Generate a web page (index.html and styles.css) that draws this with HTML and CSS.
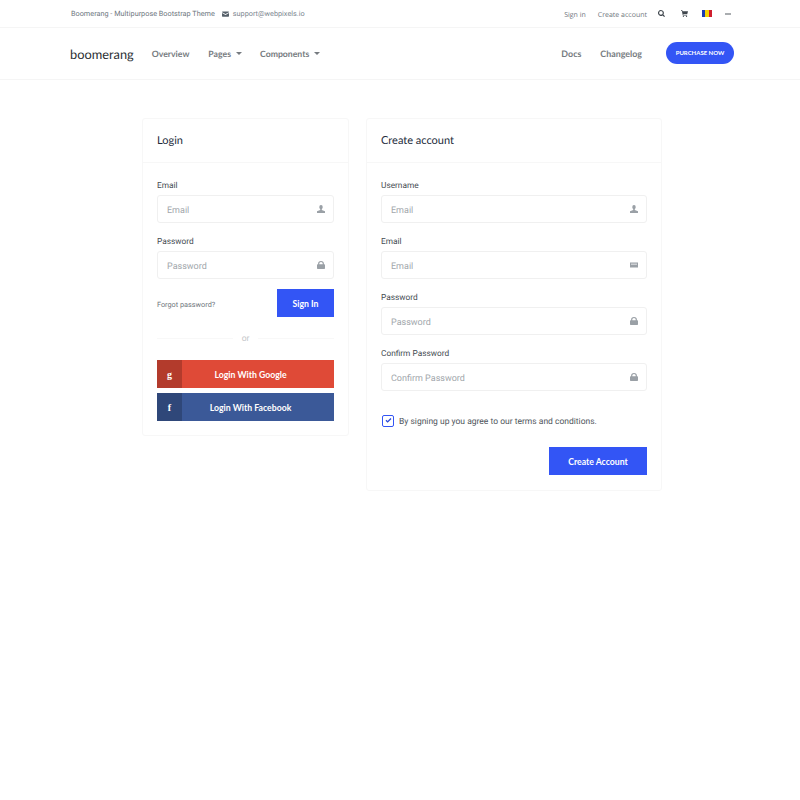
FILE: index.html
```html
<!DOCTYPE html>
<html lang="en">
<head>
    <meta charset="UTF-8">
    <meta name="viewport" content="width=device-width, initial-scale=1.0">
    <title>Boomerang - Login</title>
    <link rel="stylesheet" href="styles.css">
</head>
<body>

    <div class="topbar">
        <div class="topbar-left">
            <span>Boomerang - Multipurpose Bootstrap Theme</span>
            <span class="topbar-mail">
                <svg class="ico-mail" viewBox="0 0 12 10"><path d="M0 1.500A1 1 0 0 1 1 .5h10a1 1 0 0 1 1 1v.4L6 5.200 0 1.900zM0 3.200V8.500a1 1 0 0 0 1 1h10a1 1 0 0 0 1-1V3.200L6 6.500z"/></svg>
                support@webpixels.io
            </span>
        </div>
        <div class="topbar-right">
            <a class="top-link">Sign in</a>
            <a class="top-link">Create account</a>
            <svg class="top-ico" viewBox="0 0 10 10"><path d="M4.200 0a4.200 4.200 0 1 0 2.300 7.700L8.800 10 10 8.800 7.700 6.500A4.200 4.200 0 0 0 4.200 0zm0 1.600a2.600 2.600 0 1 1 0 5.200 2.600 2.600 0 0 1 0-5.200z"/></svg>
            <svg class="top-ico cart" viewBox="0 0 10 10"><path d="M0 .5h1.900l.3 1.300H10L8.900 6H3.200l.2 1h5.300v.9H2.600L1.200 1.400H0z"/><circle cx="3.400" cy="9" r=".9"/><circle cx="7.900" cy="9" r=".9"/></svg>
            <span class="flag"><i class="flag-b"></i><i class="flag-y"></i><i class="flag-r"></i></span>
            <svg class="dots" viewBox="0 0 6 2"><circle cx="1" cy="1" r=".8"/><circle cx="3" cy="1" r=".8"/><circle cx="5" cy="1" r=".8"/></svg>
        </div>
    </div>

    <nav class="navbar">
        <div class="navbar-left">
            <a class="logo">boomerang</a>
            <a class="nav-link">Overview</a>
            <a class="nav-link caret">Pages</a>
            <a class="nav-link caret">Components</a>
        </div>
        <div class="navbar-right">
            <a class="nav-link">Docs</a>
            <a class="nav-link">Changelog</a>
            <button class="purchase-btn">PURCHASE NOW</button>
        </div>
    </nav>

    <div class="main">
        <div class="card card-login">
            <div class="card-header">Login</div>
            <div class="card-body">
                <label class="field-label">Email</label>
                <div class="input-box">
                    <span class="placeholder">Email</span>
                    <svg class="input-ico" viewBox="0 0 8 8"><path d="M2.300 1.900a1.700 1.900 0 1 1 3.400 0c0 1-.4 1.800-.9 2.200v.9L8 6.300V8H0V6.300L3.200 5v-.9c-.5-.4-.9-1.200-.9-2.200z"/></svg>
                </div>
                <label class="field-label">Password</label>
                <div class="input-box">
                    <span class="placeholder">Password</span>
                    <svg class="input-ico" viewBox="0 0 8 8"><path d="M1.100 3.300V2.600a2.900 2.600 0 0 1 5.800 0v.7H7.300a.7.700 0 0 1 .7.700v3.300a.7.700 0 0 1-.7.700H.7a.7.700 0 0 1-.7-.7V4a.7.700 0 0 1 .7-.7zm1.200 0h3.400V2.600a1.700 1.500 0 0 0-3.400 0z"/></svg>
                </div>
                <div class="forgot-row">
                    <a class="forgot">Forgot password?</a>
                    <button class="btn btn-signin">Sign In</button>
                </div>
                <div class="or-row"><span class="or-line"></span><span class="or-text">or</span><span class="or-line"></span></div>
                <button class="social google"><span class="social-ico">g</span><span class="social-text">Login With Google</span></button>
                <button class="social facebook"><span class="social-ico">f</span><span class="social-text">Login With Facebook</span></button>
            </div>
        </div>

        <div class="card card-create">
            <div class="card-header">Create account</div>
            <div class="card-body">
                <label class="field-label">Username</label>
                <div class="input-box">
                    <span class="placeholder">Email</span>
                    <svg class="input-ico" viewBox="0 0 8 8"><path d="M2.300 1.900a1.700 1.900 0 1 1 3.400 0c0 1-.4 1.800-.9 2.200v.9L8 6.300V8H0V6.300L3.200 5v-.9c-.5-.4-.9-1.200-.9-2.200z"/></svg>
                </div>
                <label class="field-label">Email</label>
                <div class="input-box">
                    <span class="placeholder">Email</span>
                    <svg class="input-ico" viewBox="0 0 8 8"><path d="M0 1.500h8v5H0zm1 1.200v.7h6v-.7z" fill-rule="evenodd"/></svg>
                </div>
                <label class="field-label">Password</label>
                <div class="input-box">
                    <span class="placeholder">Password</span>
                    <svg class="input-ico" viewBox="0 0 8 8"><path d="M1.100 3.300V2.600a2.900 2.600 0 0 1 5.800 0v.7H7.300a.7.700 0 0 1 .7.700v3.300a.7.700 0 0 1-.7.700H.7a.7.700 0 0 1-.7-.7V4a.7.700 0 0 1 .7-.7zm1.200 0h3.400V2.600a1.700 1.500 0 0 0-3.400 0z"/></svg>
                </div>
                <label class="field-label">Confirm Password</label>
                <div class="input-box">
                    <span class="placeholder">Confirm Password</span>
                    <svg class="input-ico" viewBox="0 0 8 8"><path d="M1.100 3.300V2.600a2.900 2.600 0 0 1 5.800 0v.7H7.300a.7.700 0 0 1 .7.700v3.300a.7.700 0 0 1-.7.700H.7a.7.700 0 0 1-.7-.7V4a.7.700 0 0 1 .7-.7zm1.200 0h3.400V2.600a1.700 1.500 0 0 0-3.400 0z"/></svg>
                </div>
                <div class="terms-row">
                    <span class="checkbox">
                        <svg viewBox="0 0 8 8"><path d="M.6 4.300 1.700 3.200 3 4.500 6.300 1.200 7.400 2.300 3 6.700z"/></svg>
                    </span>
                    <span class="terms">By signing up you agree to our terms and conditions.</span>
                </div>
                <div class="create-row">
                    <button class="btn btn-create">Create Account</button>
                </div>
            </div>
        </div>
    </div>

</body>
</html>
```

FILE: styles.css
```css
* { margin: 0; padding: 0; box-sizing: border-box; }
body { background: white; font-family: Roboto, sans-serif; color: #3a4149; text-rendering: geometricPrecision; }

.topbar {
    height: 28px; padding: 0 69px 0 71px; display: flex; justify-content: space-between; align-items: center;
    border-bottom: 1px solid #f5f5f5; font-size: 8px;
}
.topbar-left { display: flex; align-items: center; gap: 7px; color: #6e7780; font-size: 7.300px; }
.topbar-mail { display: flex; align-items: center; gap: 4px; font-size: 7.300px; color: #7d8790; }
.ico-mail { width: 7px; height: 6px; fill: #56606a; }
.topbar-right { display: flex; align-items: center; }
.top-link { font-family: "Open Sans", sans-serif; font-size: 7px; color: #6f767d; margin-right: 12px; padding-top: 3px; }
.top-link + .top-ico { margin-left: -1px; }
.top-ico { width: 7px; height: 7px; fill: #3f464d; margin-right: 16px; }
.top-ico.cart { margin-right: 14px; }
.flag { display: flex; width: 10px; height: 7px; margin-right: 13px; }
.flag i { flex: 1; }
.flag-b { background: #1d3bb0; }
.flag-y { background: #f5d100; }
.flag-r { background: #cf1f2e; }
.dots { width: 6px; height: 2px; fill: #3f464d; }

.navbar {
    height: 52px; padding: 0 66px 0 70px; display: flex; justify-content: space-between; align-items: center;
    border-bottom: 1px solid #f5f5f5;
}
.navbar-left, .navbar-right { display: flex; align-items: center; }
.logo { font-family: Lato, sans-serif; font-size: 12.800px; font-weight: 400; color: #2b2f33; margin-right: 18px; }
.nav-link { font-family: Lato, sans-serif; font-size: 8.700px; font-weight: 700; color: #767b80; margin-right: 19px; }
.caret { margin-right: 18px; }
.caret::after {
    content: ""; display: inline-block; margin-left: 5px; vertical-align: 2px;
    border-top: 3px solid #767b80; border-left: 3px solid transparent; border-right: 3px solid transparent;
}
.navbar-right .nav-link { font-size: 8.900px; }
.navbar-right .nav-link:last-of-type { margin-right: 24px; }
.purchase-btn {
    width: 68px; height: 22px; border: none; border-radius: 11px; background: #3355f5; color: white;
    font-family: Lato, sans-serif; font-size: 6px; font-weight: 700; margin-bottom: 2px;
}

.main { display: flex; align-items: flex-start; gap: 17px; padding: 38px 0 0 142px; }
.card { background: white; border: 1px solid #f7f7f7; border-radius: 3px; }
.card-login { width: 207px; }
.card-create { width: 296px; }
.card-header {
    height: 44px; padding: 0 14px; display: flex; align-items: center; border-bottom: 1px solid #f7f7f7;
    font-family: Lato, sans-serif; font-size: 11px; color: #232b3b;
}
.card-body { padding: 17px 14px 14px; }
.field-label { display: block; height: 15px; font-size: 8.300px; line-height: 13px; color: #454b52; }
.input-box {
    height: 28px; margin-bottom: 13px; padding: 3px 9px 0; display: flex; justify-content: space-between; align-items: center;
    border: 1px solid #f0f0f0; border-radius: 3px;
}
.placeholder { font-size: 9px; color: #a2a7ac; }
.input-ico { width: 8px; height: 8px; fill: #9aa0a6; margin-right: -1px; margin-top: -3px; }
.forgot-row { display: flex; justify-content: space-between; align-items: center; margin-bottom: 15px; margin-top: -3px; }
.forgot { font-size: 7.300px; color: #6f767d; padding-top: 2px; }
.btn {
    height: 28px; border: none; background: #3355f5; color: white;
    font-family: Lato, sans-serif; font-size: 8.700px; font-weight: 700;
}
.btn-signin { width: 57px; }
.btn-create { width: 98px; }
.or-row { display: flex; align-items: center; gap: 9px; height: 12px; margin-bottom: 16px; }
.or-line { flex: 1; border-top: 1px solid #f8f8f8; }
.or-text { font-size: 8.500px; color: #c4c6c9; padding-top: 2px; }
.social {
    width: 100%; height: 28px; margin-bottom: 5px; border: none; display: flex; align-items: center; color: white;
    font-family: Lato, sans-serif; font-size: 8.700px; font-weight: 700;
}
.social:last-child { margin-bottom: 0; }
.social-ico { width: 25px; height: 100%; display: flex; align-items: center; justify-content: center; font-family: "Liberation Serif", serif; font-size: 10px; font-weight: 700; }
.social-text { flex: 1; text-align: center; padding-right: 15px; }
.google { background: #df4a37; }
.google .social-ico { background: #b33b2c; }
.facebook { background: #3b5998; }
.facebook .social-ico { background: #2f4779; }
.terms-row { display: flex; align-items: center; gap: 5px; margin-top: 23px; margin-bottom: 20px; height: 13px; padding-left: 1px; }
.checkbox {
    width: 12px; height: 12px; border: 1px solid #3355f5; border-radius: 2px; display: flex; align-items: center; justify-content: center;
}
.checkbox svg { width: 7px; height: 7px; fill: #2a48d8; }
.terms { font-size: 8.500px; color: #50565c; padding-top: 2px; }
.create-row { display: flex; justify-content: flex-end; margin-bottom: 1px; }
```
